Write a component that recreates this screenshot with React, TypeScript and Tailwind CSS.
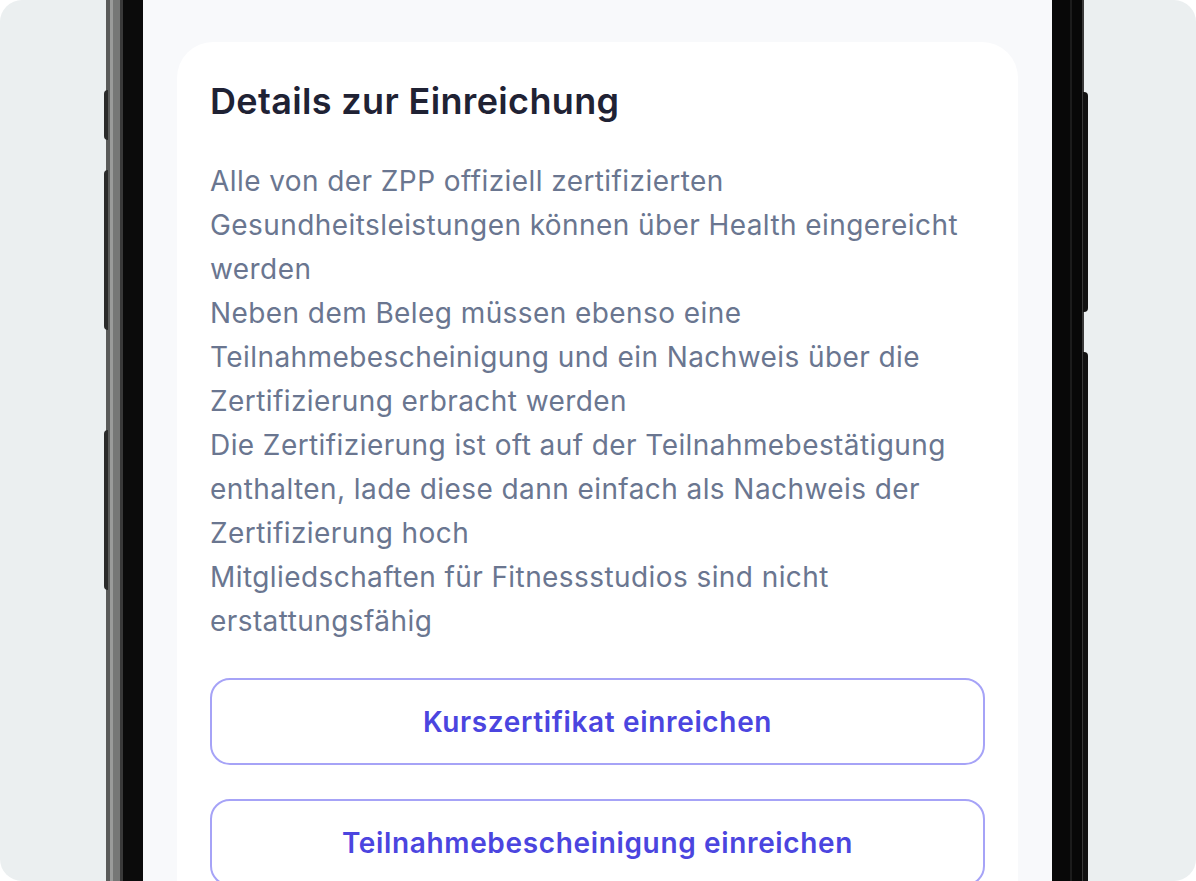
const lines = [
  "Alle von der ZPP offiziell zertifizierten",
  "Gesundheitsleistungen können über Health eingereicht",
  "werden",
  "Neben dem Beleg müssen ebenso eine",
  "Teilnahmebescheinigung und ein Nachweis über die",
  "Zertifizierung erbracht werden",
  "Die Zertifizierung ist oft auf der Teilnahmebestätigung",
  "enthalten, lade diese dann einfach als Nachweis der",
  "Zertifizierung hoch",
  "Mitgliedschaften für Fitnessstudios sind nicht",
  "erstattungsfähig",
]

const OutlineButton = ({ label }: { label: string }) => (
  <button className="h-[87px] w-full rounded-[20px] border-2 border-[#a6a3f7] bg-white text-[28px] font-semibold tracking-[0.65px] text-[#4b45df]">
    {label}
  </button>
)

export default function App() {
  return (
    <div className="h-[881px] w-[1196px] bg-white font-['Inter',sans-serif]">
      <div className="flex h-full overflow-hidden rounded-[22px] bg-[#ebeff0]">
        <div className="relative ml-[106px] flex h-full w-[978px]">
          {/* left bezel */}
          <div className="flex h-full w-[37px]">
            <div className="w-[4px] bg-[#5a5b5a]" />
            <div className="w-[3px] bg-[#9a9b9a]" />
            <div className="w-[7px] bg-[#767776]" />
            <div className="w-[3px] bg-[#3a3a3a]" />
            <div className="flex-1 bg-[#0b0b0b]" />
          </div>

          {/* screen */}
          <div className="flex-1 bg-[#f8f9fb] px-[34px] pt-[42px]">
            <div className="rounded-t-[36px] bg-white px-[33px] pt-[37px] pb-10">
              <h1 className="text-[36px] leading-[44px] font-semibold tracking-[0.35px] text-[#1f2234]">
                Details zur Einreichung
              </h1>
              <div className="mt-[36px] text-[28px] leading-[44px] tracking-[0.42px] text-[#6a7690]">
                {lines.map((l) => (
                  <div key={l} className="whitespace-nowrap">{l}</div>
                ))}
              </div>
              <div className="mt-[35px] flex flex-col gap-[34px]">
                <OutlineButton label="Kurszertifikat einreichen" />
                <OutlineButton label="Teilnahmebescheinigung einreichen" />
              </div>
            </div>
          </div>

          {/* right bezel */}
          <div className="flex h-full w-[32px]">
            <div className="w-[18px] bg-[#080808]" />
            <div className="w-[2px] bg-[#1c1c1c]" />
            <div className="w-[10px] bg-[#080808]" />
            <div className="w-[2px] bg-[#3a3a3a]" />
          </div>

          {/* side buttons */}
          <div className="absolute left-[-2px] top-[90px] h-[50px] w-[4px] rounded-l-sm bg-[#2a2a2a]" />
          <div className="absolute left-[-2px] top-[170px] h-[160px] w-[4px] rounded-l-sm bg-[#2a2a2a]" />
          <div className="absolute left-[-2px] top-[430px] h-[160px] w-[4px] rounded-l-sm bg-[#2a2a2a]" />
          <div className="absolute right-[-4px] top-[92px] h-[220px] w-[5px] rounded-r-sm bg-[#111]" />
          <div className="absolute right-[-4px] top-[352px] h-[560px] w-[5px] rounded-r-sm bg-[#111]" />
        </div>
      </div>
    </div>
  )
}
